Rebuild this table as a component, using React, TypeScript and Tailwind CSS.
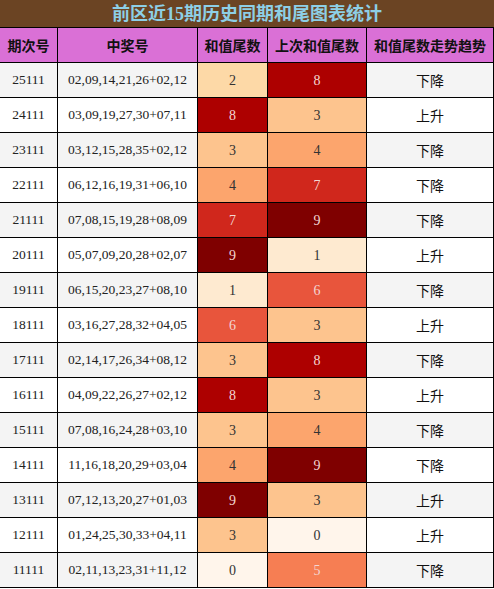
import React from "react";

const rows: [string, string, number, number, string][] = [
  ["25111", "02,09,14,21,26+02,12", 2, 8, "下降"],
  ["24111", "03,09,19,27,30+07,11", 8, 3, "上升"],
  ["23111", "03,12,15,28,35+02,12", 3, 4, "下降"],
  ["22111", "06,12,16,19,31+06,10", 4, 7, "下降"],
  ["21111", "07,08,15,19,28+08,09", 7, 9, "下降"],
  ["20111", "05,07,09,20,28+02,07", 9, 1, "上升"],
  ["19111", "06,15,20,23,27+08,10", 1, 6, "下降"],
  ["18111", "03,16,27,28,32+04,05", 6, 3, "上升"],
  ["17111", "02,14,17,26,34+08,12", 3, 8, "下降"],
  ["16111", "04,09,22,26,27+02,12", 8, 3, "上升"],
  ["15111", "07,08,16,24,28+03,10", 3, 4, "下降"],
  ["14111", "11,16,18,20,29+03,04", 4, 9, "下降"],
  ["13111", "07,12,13,20,27+01,03", 9, 3, "上升"],
  ["12111", "01,24,25,30,33+04,11", 3, 0, "上升"],
  ["11111", "02,11,13,23,31+11,12", 0, 5, "下降"],
];

const colors: Record<number, string> = {
  0: "#fff5eb",
  1: "#feead0",
  2: "#fdd9a7",
  3: "#fdc48e",
  4: "#fca56d",
  5: "#f67e53",
  6: "#e8553c",
  7: "#d0271c",
  8: "#ad0000",
  9: "#7f0000",
};

const serif = { fontFamily: '"Liberation Serif", "Noto Serif CJK SC", serif' };

function NumCell({ v, w }: { v: number; w: string }) {
  const light = v >= 5;
  return (
    <div
      className={`${w} h-full flex items-center justify-center border-r border-black text-[14px] ${light ? "text-[#f3d6d2]" : "text-[#333]"}`}
      style={{ backgroundColor: colors[v], ...serif }}
    >
      {v}
    </div>
  );
}

export default function App() {
  return (
    <div className="w-[494px] bg-white" style={{ fontFamily: '"Noto Sans CJK SC", "Noto Sans", sans-serif' }}>
      <div
        className="h-[28px] border-b border-black bg-[#6b4423] flex items-center justify-center text-[18px] font-bold text-[#8dcfe6] leading-none"
        style={{ fontFamily: '"Liberation Serif", "Noto Sans CJK SC", serif' }}
      >
        前区近15期历史同期和尾图表统计
      </div>
      <div className="h-[35px] flex border-b border-black bg-[#da70d6] text-[14px] font-bold text-[#111]">
        <div className="w-[58px] border-r border-black flex items-center justify-center">期次号</div>
        <div className="w-[140px] border-r border-black flex items-center justify-center">中奖号</div>
        <div className="w-[70px] border-r border-black flex items-center justify-center">和值尾数</div>
        <div className="w-[99px] border-r border-black flex items-center justify-center">上次和值尾数</div>
        <div className="w-[127px] border-r border-black flex items-center justify-center">和值尾数走势趋势</div>
      </div>
      {rows.map((r, i) => (
        <div
          key={r[0]}
          className={`h-[35px] flex border-b border-black ${i % 2 === 0 ? "bg-[#f4f4f4]" : "bg-white"}`}
        >
          <div className="w-[58px] border-r border-black flex items-center justify-center text-[13.5px] text-[#222]" style={serif}>
            {r[0]}
          </div>
          <div className="w-[140px] border-r border-black flex items-center justify-center text-[13.5px] text-[#222]" style={serif}>
            {r[1]}
          </div>
          <NumCell v={r[2]} w="w-[70px]" />
          <NumCell v={r[3]} w="w-[99px]" />
          <div className="w-[127px] border-r border-black flex items-center justify-center text-[14px] text-[#111]">
            {r[4]}
          </div>
        </div>
      ))}
    </div>
  );
}
